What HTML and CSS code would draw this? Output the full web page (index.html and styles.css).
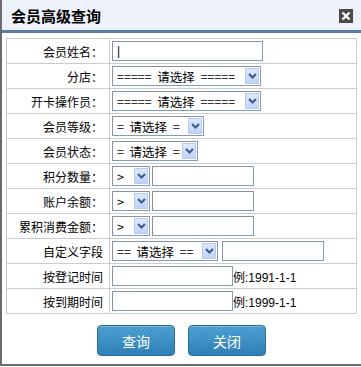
FILE: index.html
```html
<!DOCTYPE html>
<html lang="zh-CN">
<head>
    <meta charset="UTF-8">
    <title>会员高级查询</title>
    <link rel="stylesheet" href="styles.css">
</head>
<body>
    <div class="dialog">
        <div class="title-bar">
            <span class="title">会员高级查询</span>
            <span class="close">
                <svg width="14" height="14" viewBox="0 0 14 14"><rect width="14" height="14" fill="#4a4a4a"/><path d="M3.5 3.5 L10.5 10.5 M10.5 3.5 L3.5 10.5" stroke="#fff" stroke-width="2.4"/></svg>
            </span>
        </div>

        <div class="content">
            <table class="query-table">
                <tr>
                    <td class="label">会员姓名：</td>
                    <td><input type="text" class="txt w150" value="|"></td>
                </tr>
                <tr>
                    <td class="label">分店：</td>
                    <td><span class="sel w149"><select><option>=====&nbsp; 请选择 &nbsp;=====</option></select><span class="arrow"><svg width="9" height="6" viewBox="0 0 9 6"><path d="M1 1 L4.5 4.5 L8 1" fill="none" stroke="#3a5a8c" stroke-width="2"/></svg></span></span></td>
                </tr>
                <tr>
                    <td class="label">开卡操作员：</td>
                    <td><span class="sel w149"><select><option>=====&nbsp; 请选择 &nbsp;=====</option></select><span class="arrow"><svg width="9" height="6" viewBox="0 0 9 6"><path d="M1 1 L4.5 4.5 L8 1" fill="none" stroke="#3a5a8c" stroke-width="2"/></svg></span></span></td>
                </tr>
                <tr>
                    <td class="label">会员等级：</td>
                    <td><span class="sel w92"><select><option>=&nbsp; 请选择 &nbsp;=</option></select><span class="arrow"><svg width="9" height="6" viewBox="0 0 9 6"><path d="M1 1 L4.5 4.5 L8 1" fill="none" stroke="#3a5a8c" stroke-width="2"/></svg></span></span></td>
                </tr>
                <tr>
                    <td class="label">会员状态：</td>
                    <td><span class="sel w86"><select><option>=&nbsp; 请选择 &nbsp;=</option></select><span class="arrow"><svg width="9" height="6" viewBox="0 0 9 6"><path d="M1 1 L4.5 4.5 L8 1" fill="none" stroke="#3a5a8c" stroke-width="2"/></svg></span></span></td>
                </tr>
                <tr>
                    <td class="label">积分数量：</td>
                    <td><span class="sel w38"><select><option>&gt;</option></select><span class="arrow"><svg width="9" height="6" viewBox="0 0 9 6"><path d="M1 1 L4.5 4.5 L8 1" fill="none" stroke="#3a5a8c" stroke-width="2"/></svg></span></span><input type="text" class="txt w102"></td>
                </tr>
                <tr>
                    <td class="label">账户余额：</td>
                    <td><span class="sel w38"><select><option>&gt;</option></select><span class="arrow"><svg width="9" height="6" viewBox="0 0 9 6"><path d="M1 1 L4.5 4.5 L8 1" fill="none" stroke="#3a5a8c" stroke-width="2"/></svg></span></span><input type="text" class="txt w102"></td>
                </tr>
                <tr>
                    <td class="label">累积消费金额：</td>
                    <td><span class="sel w38"><select><option>&gt;</option></select><span class="arrow"><svg width="9" height="6" viewBox="0 0 9 6"><path d="M1 1 L4.5 4.5 L8 1" fill="none" stroke="#3a5a8c" stroke-width="2"/></svg></span></span><input type="text" class="txt w102"></td>
                </tr>
                <tr>
                    <td class="label">自定义字段</td>
                    <td><span class="sel w106"><select><option>==&nbsp; 请选择 &nbsp;==</option></select><span class="arrow"><svg width="9" height="6" viewBox="0 0 9 6"><path d="M1 1 L4.5 4.5 L8 1" fill="none" stroke="#3a5a8c" stroke-width="2"/></svg></span></span><input type="text" class="txt w102 gap4"></td>
                </tr>
                <tr>
                    <td class="label">按登记时间</td>
                    <td><input type="text" class="txt w121"><span class="hint">例:1991-1-1</span></td>
                </tr>
                <tr>
                    <td class="label">按到期时间</td>
                    <td><input type="text" class="txt w121"><span class="hint">例:1999-1-1</span></td>
                </tr>
            </table>

            <div class="buttons">
                <button type="button" class="btn">查询</button>
                <button type="button" class="btn">关闭</button>
            </div>
        </div>
    </div>
</body>
</html>
```

FILE: styles.css
```css
body {
    margin: 0;
    background: #fff;
    font-family: "Noto Sans CJK SC", "Liberation Sans", sans-serif;
    font-size: 12px;
    color: #000;
}

.dialog {
    width: 361px;
    height: 366px;
    border-left: 2px solid #6b6b6b;
    border-bottom: 2px solid #6b6b6b;
    box-sizing: border-box;
}

.title-bar {
    height: 30px;
    background: #edf2fa;
    border-bottom: 3px solid #5b7aa8;
    display: flex;
    align-items: center;
    justify-content: space-between;
    padding: 0 8px 0 9px;
}

.title {
    font-size: 15px;
    font-weight: bold;
}

.close {
    display: flex;
    margin-top: 2px;
}

.content {
    padding: 5px 0 0 4px;
}

.query-table {
    border-collapse: collapse;
    width: 351px;
    border: 1px solid #cccccc;
}

.query-table td {
    border: 1px solid #cccccc;
    height: 24px;
    padding: 0 0 0 2px;
    white-space: nowrap;
}

.query-table td.label {
    width: 96px;
    text-align: right;
    padding: 0 6px 0 0;
}

.txt {
    height: 20px;
    box-sizing: border-box;
    border: 1px solid #7f9db9;
    border-top-color: #8593a2;
    border-left-color: #8593a2;
    font: 12px "Liberation Sans", sans-serif;
    padding: 0 4px;
    vertical-align: middle;
    margin: 0;
}

.sel {
    display: inline-block;
    position: relative;
    height: 20px;
    vertical-align: middle;
}

.sel select {
    appearance: none;
    -webkit-appearance: none;
    width: 100%;
    height: 20px;
    box-sizing: border-box;
    border: 1px solid #7f9db9;
    border-top-color: #8593a2;
    border-left-color: #8593a2;
    background: #fff;
    font: 12.5px "Noto Sans CJK SC", "Liberation Sans", sans-serif;
    padding: 0 0 0 4px;
    margin: 0;
    color: #000;
}

.sel .arrow {
    position: absolute;
    right: 2px;
    top: 2px;
    width: 14px;
    height: 16px;
    box-sizing: border-box;
    border: 1px solid #b8cbec;
    background: linear-gradient(#dde8fd, #c2d3fb);
    display: flex;
    align-items: center;
    justify-content: center;
}

.w38 { width: 38px; }
.w86 { width: 86px; }
.w92 { width: 92px; }
.w106 { width: 106px; }
.w149 { width: 149px; }
.w150 { width: 151px; }
.w102 { width: 102px; margin-left: 2px; }
.w121 { width: 121px; }
.gap4 { margin-left: 4px; }

.hint {
    font-family: "Liberation Sans", "Noto Sans CJK SC", sans-serif;
    vertical-align: middle;
}

.buttons {
    display: flex;
    justify-content: center;
    gap: 13px;
    padding: 11px 4px 0 0;
}

.btn {
    width: 78px;
    height: 31px;
    border: 1px solid #2a6f9e;
    border-radius: 4px;
    background: repeating-linear-gradient(135deg, rgba(255,255,255,0.07) 0 1px, rgba(255,255,255,0) 1px 3px),
        linear-gradient(#479dce, #2a7db5);
    color: #fff;
    font: 14px "Noto Sans CJK SC", sans-serif;
    cursor: pointer;
    box-shadow: inset 0 1px 0 rgba(255,255,255,0.25);
}
```
